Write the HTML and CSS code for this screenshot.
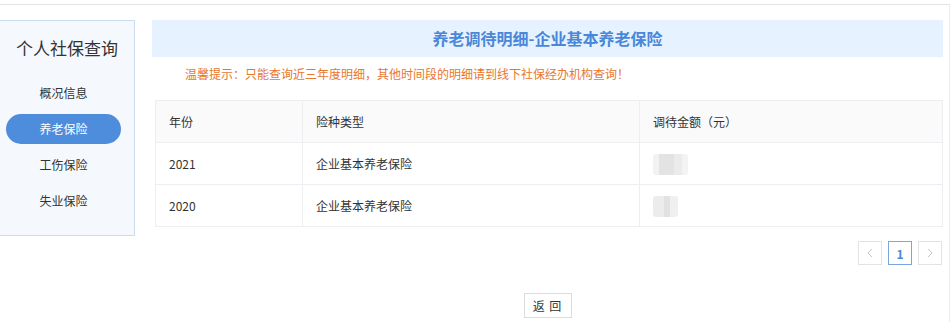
FILE: index.html
```html
<!DOCTYPE html>
<html lang="zh-CN">
<head>
    <meta charset="UTF-8">
    <title>个人社保查询</title>
    <link rel="stylesheet" href="styles.css">
</head>
<body>
    <div class="page">
        <!-- Side menu -->
        <div class="side">
            <h2 class="side-title">个人社保查询</h2>
            <ul class="menu">
                <li>概况信息</li>
                <li class="active">养老保险</li>
                <li>工伤保险</li>
                <li>失业保险</li>
            </ul>
        </div>

        <!-- Detail -->
        <div class="main">
            <div class="banner">养老调待明细-企业基本养老保险</div>
            <p class="notice">温馨提示：只能查询近三年度明细，其他时间段的明细请到线下社保经办机构查询！</p>
            <table class="detail">
                <thead>
                    <tr><th class="col-year">年份</th><th class="col-type">险种类型</th><th>调待金额（元）</th></tr>
                </thead>
                <tbody>
                    <tr><td>2021</td><td>企业基本养老保险</td><td><span class="blur wide"></span></td></tr>
                    <tr><td>2020</td><td>企业基本养老保险</td><td><span class="blur"></span></td></tr>
                </tbody>
            </table>
            <div class="pager">
                <span class="page-btn">
                    <svg width="8" height="10" viewBox="0 0 8 10"><path d="M6 1 L2 5 L6 9" fill="none" stroke="#c4c4c4" stroke-width="1"/></svg>
                </span>
                <span class="page-btn current">1</span>
                <span class="page-btn">
                    <svg width="8" height="10" viewBox="0 0 8 10"><path d="M2 1 L6 5 L2 9" fill="none" stroke="#c4c4c4" stroke-width="1"/></svg>
                </span>
            </div>
            <div class="actions">
                <button class="back">返&nbsp;回</button>
            </div>
        </div>
    </div>
</body>
</html>
```

FILE: styles.css
```css
body {
    margin: 0;
    background: #fff;
    font-family: "Noto Sans CJK SC", "Noto Sans", sans-serif;
    color: #333;
}

.page {
    display: flex;
    align-items: flex-start;
    width: 950px;
    height: 318px;
    margin-top: 4px;
    padding-top: 15px;
    box-sizing: border-box;
    border-top: 1px solid #e2e2e2;
    border-right: 1px solid #ededed;
}

/* Side menu */
.side {
    width: 135px;
    height: 216px;
    box-sizing: border-box;
    background: #f5f9fe;
    border: 1px solid #c9dcf0;
    border-left: none;
}

.side-title {
    margin: 15px 0 0;
    font-size: 17px;
    font-weight: normal;
    text-align: center;
    color: #333;
    line-height: 24px;
}

.menu {
    list-style: none;
    margin: 18px 0 0;
    padding: 0;
}

.menu li {
    height: 30px;
    line-height: 30px;
    margin: 0 13px 6px 6px;
    border-radius: 15px;
    text-align: center;
    font-size: 12px;
    color: #333;
}

.menu li.active {
    background: #4d8ddc;
    color: #fff;
}

/* Detail */
.main {
    width: 791px;
    margin-left: 17px;
}

.banner {
    height: 37px;
    line-height: 37px;
    background: #e6f2ff;
    color: #4a87d8;
    font-size: 16px;
    font-weight: bold;
    text-align: center;
}

.notice {
    margin: 8px 0 0 33px;
    line-height: 18px;
    font-size: 12px;
    color: #e8772e;
}

.detail {
    width: 788px;
    margin: 17px 0 0 3px;
    border-collapse: collapse;
    font-size: 12px;
    color: #333;
}

.detail th,
.detail td {
    height: 41px;
    padding: 0 13px;
    text-align: left;
    font-weight: normal;
    border: 1px solid #eceef2;
}

.detail th {
    background: #fafafa;
}

.col-year {
    width: 120px;
}

.col-type {
    width: 310px;
}

.blur {
    display: inline-block;
    width: 25px;
    height: 21px;
    margin-top: 2px;
    vertical-align: middle;
    border-radius: 3px;
    background: linear-gradient(90deg, #ececec 0 45%, #e2e2e2 45% 70%, #f0f0f0 70%);
}

.blur.wide {
    width: 35px;
    background: linear-gradient(90deg, #f2f2f2 0 18%, #e3e3e3 18% 60%, #ebebeb 60% 82%, #f3f3f3 82%);
}

.pager {
    display: flex;
    justify-content: flex-end;
    gap: 6px;
    margin: 14px 1px 0 0;
}

.page-btn {
    display: flex;
    align-items: center;
    justify-content: center;
    width: 24px;
    height: 24px;
    box-sizing: border-box;
    border: 1px solid #e3e3e3;
    font-size: 12px;
    color: #bbb;
}

.page-btn.current {
    border-color: #7aa7dc;
    color: #4a87d8;
    font-weight: bold;
}

.actions {
    display: flex;
    justify-content: center;
    margin-top: 28px;
}

.back {
    width: 48px;
    height: 25px;
    padding: 0;
    border: 1px solid #dcdcdc;
    background: #fff;
    font-family: inherit;
    font-size: 12px;
    letter-spacing: 1px;
    color: #333;
}
```
